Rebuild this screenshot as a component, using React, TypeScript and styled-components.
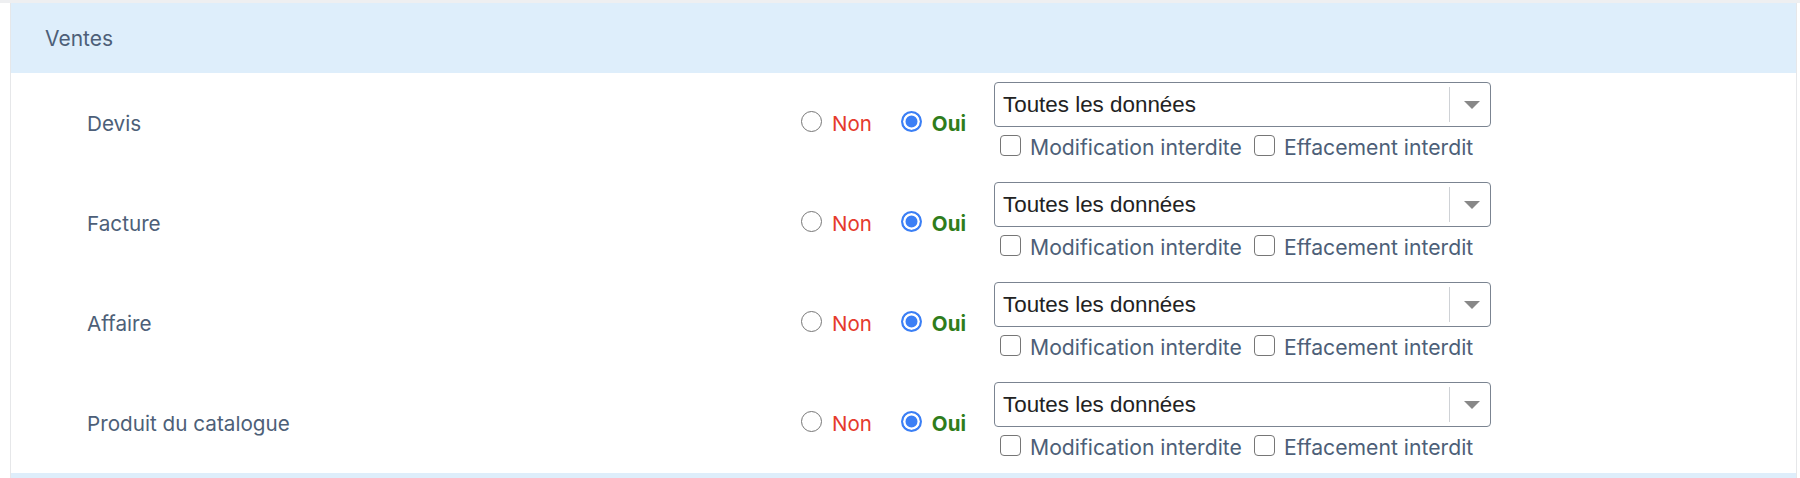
import React from "react";
import styled, { createGlobalStyle } from "styled-components";

const Global = createGlobalStyle`
  html, body { margin: 0; padding: 0; background: #ffffff; }
  body { font-family: Inter, "Noto Sans", sans-serif; }
`;

const Page = styled.div`
  padding: 0 3px 0 10px;
`;

const TopStrip = styled.div`
  height: 3px;
  margin: 0 -3px 0 -10px;
  background: #eeeff1;
`;

const Panel = styled.div`
  border-left: 1px solid #e6e7e9;
  border-right: 1px solid #e6e7e9;
`;

const SectionHeader = styled.div`
  height: 70px;
  display: flex;
  align-items: center;
  padding-left: 34px;
  background: #deeefb;
  color: #4d5f78;
  font-size: 21px;
`;

const Row = styled.div`
  display: grid;
  grid-template-columns: 714px 193px 497px 1fr;
  align-items: center;
  padding-left: 76px;
  height: 100px;
`;

const Label = styled.div`
  color: #4d5f78;
  font-size: 20.7px;
  padding-top: 1px;
`;

const RadioGroup = styled.div`
  display: flex;
  align-items: center;
  margin-top: -3px;
`;

const RadioOption = styled.label`
  display: flex;
  align-items: center;
  gap: 10px;
  margin-right: 29px;
  font-size: 20.5px;
  cursor: pointer;
`;

const RadioCircle = styled.span<{ $checked?: boolean }>`
  box-sizing: border-box;
  width: 21px;
  height: 21px;
  border-radius: 50%;
  border: ${(p) => (p.$checked ? "2px solid #3b7ff5" : "1.5px solid #767676")};
  background: ${(p) => (p.$checked ? "#3b7ff5" : "#fff")};
  box-shadow: ${(p) => (p.$checked ? "inset 0 0 0 2.5px #fff" : "none")};
  flex: none;
`;

const RadioText = styled.span<{ $tone: "no" | "yes" }>`
  color: ${(p) => (p.$tone === "no" ? "#e53a2c" : "#2f7d1c")};
  font-weight: ${(p) => (p.$tone === "yes" ? 700 : 400)};
  margin-top: 3px;
`;

const SelectColumn = styled.div`
  display: flex;
  flex-direction: column;
  gap: 7px;
  align-self: start;
  padding-top: 9px;
`;

const SelectBox = styled.div`
  box-sizing: border-box;
  height: 45px;
  border: 1.5px solid #7b8491;
  border-radius: 4px;
  display: flex;
  align-items: center;
  background: #fff;
`;

const SelectValue = styled.span`
  flex: 1;
  padding-left: 8px;
  font-family: "Liberation Sans", Arial, sans-serif;
  font-size: 22.4px;
  color: #222;
`;

const SelectArrowZone = styled.span`
  width: 40px;
  height: 35px;
  border-left: 1px solid #cfd2d6;
  display: flex;
  align-items: center;
  justify-content: center;
`;

const Arrow = styled.span`
  width: 0;
  height: 0;
  border-left: 8px solid transparent;
  border-right: 8px solid transparent;
  border-top: 8px solid #888;
  margin-left: 3px;
`;

const CheckRow = styled.div`
  display: flex;
  align-items: center;
  padding-left: 6px;
  height: 22px;
`;

const CheckOption = styled.label`
  display: flex;
  align-items: center;
  gap: 9px;
  margin-right: 12px;
  color: #4d5f78;
  font-size: 21.2px;
`;

const CheckBox = styled.span`
  box-sizing: border-box;
  width: 21px;
  height: 21px;
  border: 1.5px solid #767676;
  border-radius: 4px;
  background: #fff;
  flex: none;
`;

const CheckText = styled.span`
  margin-top: 3px;
`;

const NextHeader = styled.div`
  height: 6px;
  background: #deeefb;
`;

const items = ["Devis", "Facture", "Affaire", "Produit du catalogue"];

export default function App() {
  return (
    <>
      <Global />
      <Page>
        <TopStrip />
        <Panel>
          <SectionHeader>Ventes</SectionHeader>
          {items.map((name) => (
            <Row key={name}>
              <Label>{name}</Label>
              <RadioGroup>
                <RadioOption>
                  <RadioCircle />
                  <RadioText $tone="no">Non</RadioText>
                </RadioOption>
                <RadioOption>
                  <RadioCircle $checked />
                  <RadioText $tone="yes">Oui</RadioText>
                </RadioOption>
              </RadioGroup>
              <SelectColumn>
                <SelectBox>
                  <SelectValue>Toutes les données</SelectValue>
                  <SelectArrowZone>
                    <Arrow />
                  </SelectArrowZone>
                </SelectBox>
                <CheckRow>
                  <CheckOption>
                    <CheckBox />
                    <CheckText>Modification interdite</CheckText>
                  </CheckOption>
                  <CheckOption>
                    <CheckBox />
                    <CheckText>Effacement interdit</CheckText>
                  </CheckOption>
                </CheckRow>
              </SelectColumn>
              <div />
            </Row>
          ))}
          <NextHeader />
        </Panel>
      </Page>
    </>
  );
}
